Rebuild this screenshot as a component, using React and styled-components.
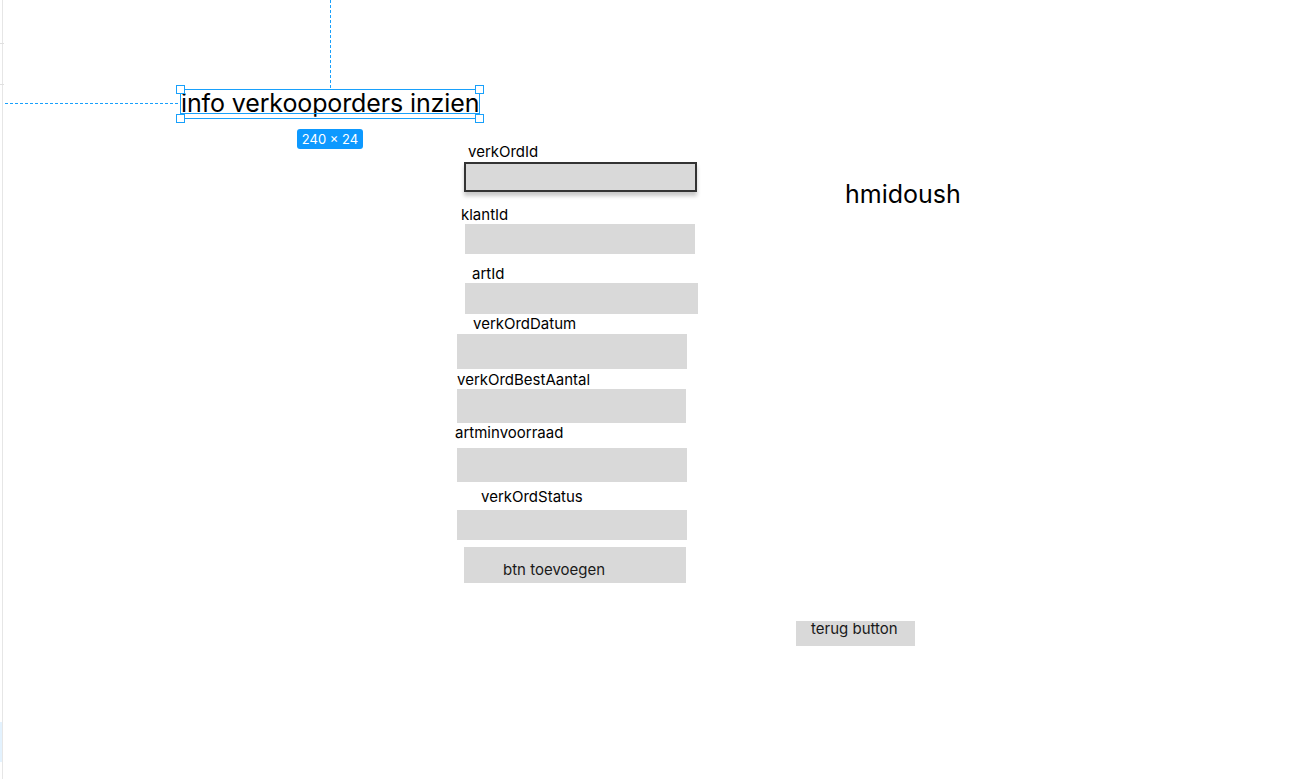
import React from "react";
import styled, { createGlobalStyle } from "styled-components";

const Global = createGlobalStyle`
  html, body { margin: 0; padding: 0; background: #ffffff; }
  body { font-family: Inter, "Noto Sans", sans-serif; color: #000; }
`;

/* The Figma-like design canvas: everything on it sits at its own spot */
const Canvas = styled.div`
  position: relative;
  width: 1297px;
  height: 779px;
  overflow: hidden;
  background: #ffffff;
`;

const Ruler = styled.div`
  position: absolute;
  left: 0;
  top: 0;
  width: 2px;
  height: 100%;
  border-right: 1px solid #e6e6e6;
  display: flex;
  flex-direction: column;
`;

const RulerTick = styled.div`
  width: 4px;
  height: 1px;
  background: #e0e0e0;
  margin-top: ${(p) => p.$gap}px;
`;

const RulerHighlight = styled.div`
  width: 2px;
  height: 40px;
  background: #e3f2fe;
  margin-top: ${(p) => p.$gap}px;
`;

const GuideV = styled.div`
  position: absolute;
  left: 330px;
  top: 0;
  height: 88px;
  width: 1px;
  background: repeating-linear-gradient(to bottom, #18a0fb 0 3px, transparent 3px 5px);
`;

const GuideH = styled.div`
  position: absolute;
  left: 5px;
  top: 103px;
  width: 174px;
  height: 1px;
  background: repeating-linear-gradient(to right, #18a0fb 0 3px, transparent 3px 5px);
`;

/* Selected text layer with its handles and size badge */
const TextLayer = styled.div`
  position: absolute;
  left: 180px;
  top: 89px;
  width: 300px;
  display: flex;
  flex-direction: column;
  align-items: center;
`;

const Selection = styled.div`
  position: relative;
  width: 100%;
  height: 30px;
  box-sizing: border-box;
  border: 1px solid #18a0fb;
  display: flex;
  align-items: flex-start;
`;

const Title = styled.div`
  font-size: 25px;
  line-height: 30px;
  letter-spacing: -0.12px;
  margin-top: -2px;
  white-space: nowrap;
  color: #000;
`;

const Baseline = styled.div`
  position: absolute;
  left: 0;
  right: 0;
  top: 23px;
  height: 1px;
  background: #18a0fb;
`;

const Handle = styled.div`
  position: absolute;
  width: 9px;
  height: 9px;
  box-sizing: border-box;
  background: #fff;
  border: 1.5px solid #18a0fb;
  ${(p) => (p.$right ? "right: -5px;" : "left: -5px;")}
  ${(p) => (p.$bottom ? "bottom: -5px;" : "top: -5px;")}
`;

const SizeBadge = styled.div`
  margin-top: 10px;
  height: 20px;
  padding: 0 5px;
  border-radius: 3px;
  background: #0d99ff;
  color: #fff;
  font-size: 13px;
  line-height: 20px;
  white-space: nowrap;
`;

/* Form column */
const Form = styled.div`
  position: absolute;
  left: 455px;
  top: 143px;
  display: flex;
  flex-direction: column;
`;

const FieldGroup = styled.div`
  display: flex;
  flex-direction: column;
  margin-top: ${(p) => p.$gap}px;
`;

const Label = styled.div`
  font-size: 15px;
  line-height: 18px;
  height: ${(p) => p.$h}px;
  padding-left: ${(p) => p.$indent}px;
  white-space: nowrap;
  color: #000;
`;

const InputBox = styled.div`
  margin-left: ${(p) => p.$indent}px;
  width: ${(p) => p.$w}px;
  height: ${(p) => p.$h}px;
  box-sizing: border-box;
  background: #d9d9d9;
  ${(p) =>
    p.$active
      ? `border: 2px solid #333333; box-shadow: 0 4px 4px rgba(0,0,0,0.22);`
      : ""}
`;

const Button = styled.div`
  margin-left: ${(p) => p.$indent}px;
  margin-top: ${(p) => p.$gap}px;
  width: ${(p) => p.$w}px;
  height: ${(p) => p.$h}px;
  box-sizing: border-box;
  padding-left: ${(p) => p.$pad}px;
  padding-top: ${(p) => p.$top}px;
  background: #d9d9d9;
  color: #1a1a1a;
  font-size: 15px;
  line-height: ${(p) => p.$lh || 18}px;
  white-space: nowrap;
`;

const UserName = styled.div`
  position: absolute;
  left: 845px;
  top: 179px;
  font-size: 25px;
  line-height: 30px;
  white-space: nowrap;
  color: #000;
`;

const BackButtonSpot = styled.div`
  position: absolute;
  left: 796px;
  top: 621px;
`;

const fields = [
  { label: "verkOrdId", li: 13, lh: 19, gap: 0, bi: 9, w: 233, h: 30, active: true },
  { label: "klantId", li: 6, lh: 18, gap: 14, bi: 10, w: 230, h: 30 },
  { label: "artId", li: 17, lh: 18, gap: 11, bi: 10, w: 233, h: 31 },
  { label: "verkOrdDatum", li: 18, lh: 19, gap: 1, bi: 2, w: 230, h: 35 },
  { label: "verkOrdBestAantal", li: 2, lh: 18, gap: 2, bi: 2, w: 229, h: 34 },
  { label: "artminvoorraad", li: 0, lh: 24, gap: 1, bi: 2, w: 230, h: 34 },
  { label: "verkOrdStatus", li: 26, lh: 22, gap: 6, bi: 2, w: 230, h: 30 },
];

export default function App() {
  return (
    <>
      <Global />
      <Canvas>
        <Ruler>
          <RulerTick $gap={43} />
          <RulerTick $gap={40} />
          <RulerHighlight $gap={637} />
        </Ruler>

        <GuideV />
        <GuideH />

        <TextLayer>
          <Selection>
            <Title>info verkooporders inzien</Title>
            <Baseline />
            <Handle />
            <Handle $right />
            <Handle $bottom />
            <Handle $right $bottom />
          </Selection>
          <SizeBadge>240 × 24</SizeBadge>
        </TextLayer>

        <Form>
          {fields.map((f) => (
            <FieldGroup key={f.label} $gap={f.gap}>
              <Label $indent={f.li} $h={f.lh}>{f.label}</Label>
              <InputBox $indent={f.bi} $w={f.w} $h={f.h} $active={f.active} />
            </FieldGroup>
          ))}
          <Button $indent={9} $gap={7} $w={222} $h={36} $pad={39} $top={14}>
            btn toevoegen
          </Button>
        </Form>

        <UserName>hmidoush</UserName>

        <BackButtonSpot>
          <Button $indent={0} $gap={0} $w={119} $h={25} $pad={15} $top={0} $lh={16}>
            terug button
          </Button>
        </BackButtonSpot>
      </Canvas>
    </>
  );
}
